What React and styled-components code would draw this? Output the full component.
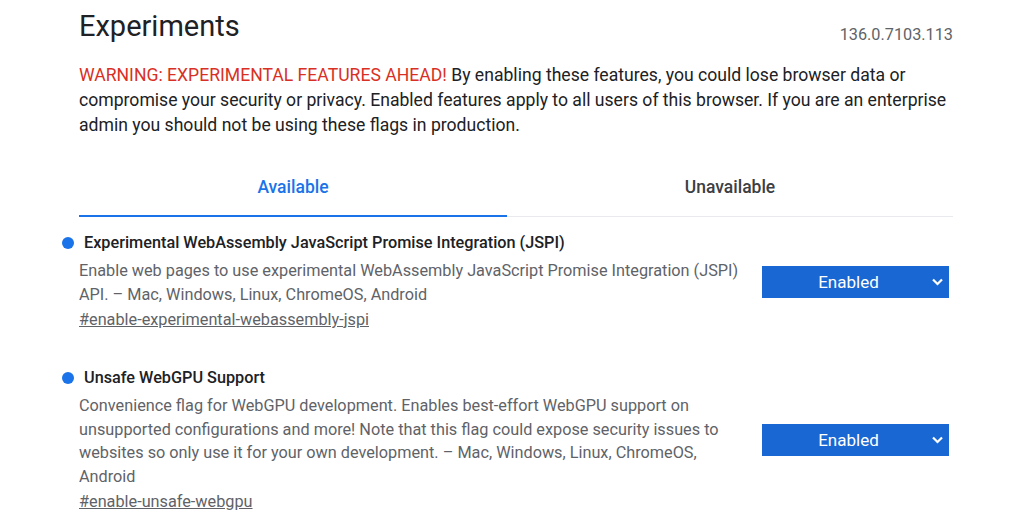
import React from "react";
import styled, { createGlobalStyle } from "styled-components";

const GlobalStyle = createGlobalStyle`
  body {
    margin: 0;
    background: #fff;
    font-family: Roboto, "Liberation Sans", sans-serif;
    color: #202124;
  }
`;

const Page = styled.div`
  width: 874px;
  margin-left: 79px;
`;

const Header = styled.header`
  display: flex;
  justify-content: space-between;
  align-items: flex-start;
  padding-top: 7px;
`;

const Title = styled.h1`
  margin: 0;
  font-size: 29px;
  font-weight: 400;
  line-height: 38px;
`;

const Version = styled.span`
  margin-top: 18px;
  font-size: 16.25px;
  color: #5f6368;
`;

const Blurb = styled.p`
  margin: 18px 0 0;
  font-size: 17.6px;
  line-height: 25px;
`;

const Warning = styled.span`
  color: #d93025;
`;

const Tabs = styled.div`
  display: grid;
  grid-template-columns: 428px 1fr;
  margin-top: 32px;
  border-bottom: 1px solid #e8eaed;
`;

const Tab = styled.div`
  display: flex;
  justify-content: center;
  padding: 6px 0 17px;
  font-size: 17.5px;
  font-weight: 500;
  line-height: 22px;
  color: ${(p) => (p.$active ? "#1a73e8" : "#3c4043")};
  border-bottom: 2px solid ${(p) => (p.$active ? "#1a73e8" : "transparent")};
  margin-bottom: -1px;
`;

const List = styled.div`
  display: flex;
  flex-direction: column;
  gap: 36px;
  padding-top: 15px;
`;

const Flag = styled.div`
  display: flex;
  align-items: center;
`;

const Info = styled.div`
  flex: 1;
  padding-right: 16px;
`;

const Name = styled.h2`
  position: relative;
  margin: 0 0 5px;
  padding-left: 5px;
  font-size: 16.25px;
  font-weight: 500;
  line-height: 22px;
  color: #202124;

  &::before {
    content: "";
    position: absolute;
    left: -17px;
    top: 5px;
    width: 12px;
    height: 12px;
    border-radius: 50%;
    background: #1a73e8;
  }
`;

const Desc = styled.p`
  margin: 0;
  font-size: 16.25px;
  line-height: 23.5px;
  color: #5f6368;
`;

const Anchor = styled.a`
  display: inline-block;
  margin-top: 3px;
  font-size: 16.25px;
  line-height: 22px;
  color: #5f6368;
  text-decoration: underline;
`;

const Select = styled.div`
  flex: none;
  box-sizing: border-box;
  width: 187px;
  height: 32px;
  margin-right: 4px;
  padding-right: 14px;
  position: relative;
  display: flex;
  align-items: center;
  justify-content: center;
  background: #1967d2;
  color: #fff;
  font-size: 17px;

  svg {
    position: absolute;
    right: 5px;
    top: 11px;
  }
`;

const Chevron = () => (
  <svg width="13" height="10" viewBox="0 0 13 10">
    <path d="M2 2.5 L6.5 7 L11 2.5" fill="none" stroke="#fff" strokeWidth="2.2" />
  </svg>
);

const flags = [
  {
    name: "Experimental WebAssembly JavaScript Promise Integration (JSPI)",
    desc: "Enable web pages to use experimental WebAssembly JavaScript Promise Integration (JSPI) API. – Mac, Windows, Linux, ChromeOS, Android",
    id: "enable-experimental-webassembly-jspi",
  },
  {
    name: "Unsafe WebGPU Support",
    desc: "Convenience flag for WebGPU development. Enables best-effort WebGPU support on unsupported configurations and more! Note that this flag could expose security issues to websites so only use it for your own development. – Mac, Windows, Linux, ChromeOS, Android",
    id: "enable-unsafe-webgpu",
  },
];

export default function App() {
  return (
    <>
      <GlobalStyle />
      <Page>
        <Header>
          <Title>Experiments</Title>
          <Version>136.0.7103.113</Version>
        </Header>
        <Blurb>
          <Warning>WARNING: EXPERIMENTAL FEATURES AHEAD!</Warning> By enabling
          these features, you could lose browser data or compromise your
          security or privacy. Enabled features apply to all users of this
          browser. If you are an enterprise admin you should not be using these
          flags in production.
        </Blurb>
        <Tabs>
          <Tab $active>Available</Tab>
          <Tab>Unavailable</Tab>
        </Tabs>
        <List>
          {flags.map((f) => (
            <Flag key={f.id}>
              <Info>
                <Name>{f.name}</Name>
                <Desc>{f.desc}</Desc>
                <Anchor href={"#" + f.id}>#{f.id}</Anchor>
              </Info>
              <Select>
                Enabled
                <Chevron />
              </Select>
            </Flag>
          ))}
        </List>
      </Page>
    </>
  );
}
